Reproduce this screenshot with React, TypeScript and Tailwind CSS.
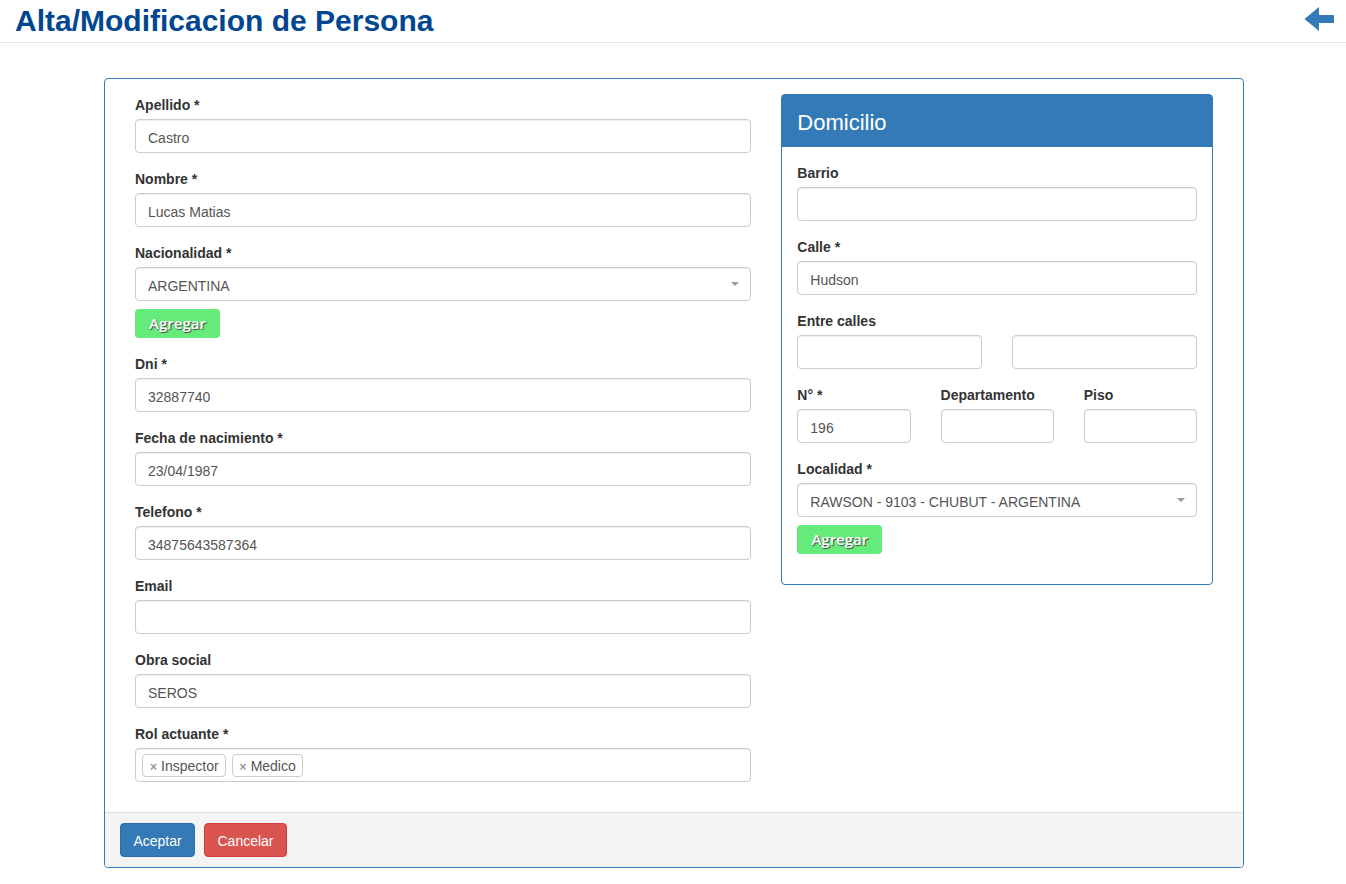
import type { ReactNode } from "react";

const control =
  "block h-[34px] w-full min-w-0 rounded-[4px] border border-[#ccc] bg-white px-3 pt-[3px] text-sm text-[#555] shadow-[inset_0_1px_1px_rgba(0,0,0,0.075)] outline-none focus:border-[#66afe9]";

function Label({ id, children }: { id: string; children: ReactNode }) {
  return (
    <label htmlFor={id} className="mb-1 block pt-px font-bold">
      {children}
    </label>
  );
}

function Field({ id, label, value = "" }: { id: string; label: string; value?: string }) {
  return (
    <div>
      <Label id={id}>{label}</Label>
      <input id={id} type="text" defaultValue={value} className={control} />
    </div>
  );
}

function SelectField({ id, label, value }: { id: string; label: string; value: string }) {
  return (
    <div>
      <Label id={id}>{label}</Label>
      <div className="relative">
        <select id={id} defaultValue={value} className={`${control} appearance-none pr-8`}>
          <option>{value}</option>
        </select>
        <svg
          viewBox="0 0 8 4"
          className="pointer-events-none absolute top-[15px] right-3 h-1 w-2 fill-[#999]"
          aria-hidden="true"
        >
          <path d="M0 0h8L4 4z" />
        </svg>
      </div>
      <button
        type="button"
        className="mt-2 block h-[29px] w-[85px] rounded-[4px] bg-[#65eb79] pb-px text-center font-['Open_Sans',sans-serif] text-[15px] leading-5 font-semibold text-white [text-shadow:1px_1px_1px_#444]"
      >
        Agregar
      </button>
    </div>
  );
}

function Tag({ children }: { children: string }) {
  return (
    <li className="flex h-[23px] items-center gap-1 rounded-[4px] border border-[#ccc] bg-white pt-px pr-1.5 pl-[7px] text-[#555]">
      <button type="button" aria-label={`Quitar ${children}`} className="pt-[2px] text-xs font-bold text-[#999]">
        ×
      </button>
      {children}
    </li>
  );
}

export default function App() {
  return (
    <div className="bg-white pb-4 font-['Liberation_Sans',Arial,sans-serif] text-sm leading-5 text-[#333]">
      <header className="flex h-[43px] items-center justify-between border-b border-[#e5e5e5] pr-3 pb-1 pl-[15px]">
        <h1 className="pt-[3px] text-[30px] leading-9 font-bold text-[#004690]">Alta/Modificacion de Persona</h1>
        <a href="#volver" aria-label="Volver">
          <svg viewBox="0 0 30 24" className="h-6 w-[30px] fill-[#337ab7]" aria-hidden="true">
            <path d="M.5 12 15 0v8H29q1 0 1 1v6q0 1-1 1H15v8z" />
          </svg>
        </a>
      </header>

      <main className="mt-[35px] pr-[15px] pl-[17px]">
        <form className="mx-auto max-w-[1140px] overflow-hidden rounded-[4px] border border-[#337ab7]">
          <div className="grid grid-cols-12 items-start gap-[30px] px-[30px] pt-[15px] pb-[30px]">
            <div className="col-span-7 flex flex-col gap-[15px]">
              <Field id="apellido" label="Apellido *" value="Castro" />
              <Field id="nombre" label="Nombre *" value="Lucas Matias" />
              <SelectField id="nacionalidad" label="Nacionalidad *" value="ARGENTINA" />
              <Field id="dni" label="Dni *" value="32887740" />
              <Field id="nacimiento" label="Fecha de nacimiento *" value="23/04/1987" />
              <Field id="telefono" label="Telefono *" value="34875643587364" />
              <Field id="email" label="Email" />
              <Field id="obra" label="Obra social" value="SEROS" />
              <div>
                <Label id="rol">Rol actuante *</Label>
                <div className="flex h-[34px] items-center rounded-[4px] border border-[#ccc] px-1.5 shadow-[inset_0_1px_1px_rgba(0,0,0,0.075)]">
                  <ul className="flex gap-1.5">
                    <Tag>Inspector</Tag>
                    <Tag>Medico</Tag>
                  </ul>
                  <input id="rol" type="text" className="ml-1.5 min-w-0 flex-1 outline-none" />
                </div>
              </div>
            </div>

            <section className="col-span-5 rounded-[4px] border border-[#337ab7]">
              <h2 className="bg-[#337ab7] px-[15px] pt-[15px] pb-[11px] text-[22px] leading-[26px] text-white">
                Domicilio
              </h2>
              <div className="flex flex-col gap-[15px] px-[15px] pt-[15px] pb-[30px]">
                <Field id="barrio" label="Barrio" />
                <Field id="calle" label="Calle *" value="Hudson" />
                <div>
                  <Label id="entre1">Entre calles</Label>
                  <div className="grid grid-cols-2 gap-[30px]">
                    <input id="entre1" type="text" className={control} />
                    <input id="entre2" type="text" aria-label="Entre calles, segunda" className={control} />
                  </div>
                </div>
                <div className="grid grid-cols-3 gap-[30px]">
                  <Field id="numero" label="N° *" value="196" />
                  <Field id="departamento" label="Departamento" />
                  <Field id="piso" label="Piso" />
                </div>
                <SelectField
                  id="localidad"
                  label="Localidad *"
                  value="RAWSON - 9103 - CHUBUT - ARGENTINA"
                />
              </div>
            </section>
          </div>

          <footer className="flex gap-[9px] border-t border-[#ddd] bg-[#f4f4f4] px-[15px] py-2.5">
            <button
              type="submit"
              className="h-[34px] min-w-[75px] rounded-[4px] border border-[#2e6da4] bg-[#337ab7] px-3 pt-[2px] text-white"
            >
              Aceptar
            </button>
            <button
              type="button"
              className="h-[34px] min-w-[83px] rounded-[4px] border border-[#d43f3a] bg-[#d9534f] px-3 pt-[2px] text-white"
            >
              Cancelar
            </button>
          </footer>
        </form>
      </main>
    </div>
  );
}
